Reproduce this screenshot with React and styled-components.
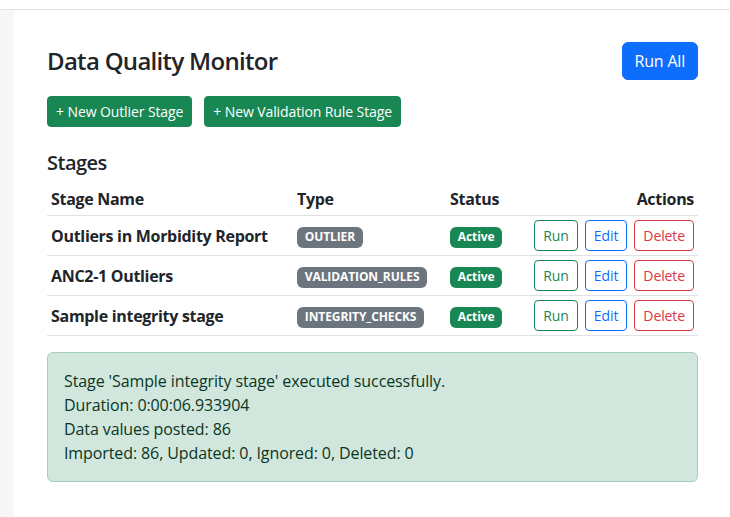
import React from "react";
import styled, { createGlobalStyle } from "styled-components";

const GlobalStyle = createGlobalStyle`
  * { box-sizing: border-box; }
  body {
    margin: 0;
    background: #fff;
    font-family: "Open Sans", "Noto Sans", sans-serif;
    font-size: 16px;
    line-height: 24px;
    color: #212529;
  }
`;

const TopBar = styled.header`
  height: 10px;
  border-bottom: 1px solid #e3e3e3;
  background: #fff;
`;

const Body = styled.div`
  display: flex;
  min-height: 507px;
`;

const Sidebar = styled.aside`
  width: 14px;
  flex: none;
  background: #f6f7f9;
`;

const Main = styled.main`
  flex: 1;
  padding: 32px 32px 0 33px;
`;

const HeaderRow = styled.div`
  display: flex;
  justify-content: space-between;
  align-items: center;
  margin-bottom: 16px;
`;

const Title = styled.h3`
  margin: 0;
  font-size: 24px;
  font-weight: 600;
  line-height: 30px;
  letter-spacing: -0.7px;
  color: #212529;
`;

const Button = styled.button`
  font-family: inherit;
  border: 1px solid ${(p) => p.$color};
  background: ${(p) => (p.$outline ? "transparent" : p.$color)};
  color: ${(p) => (p.$outline ? p.$color : "#fff")};
  font-size: ${(p) => (p.$small ? "14px" : "16px")};
  line-height: ${(p) => (p.$small ? "21px" : "24px")};
  padding: ${(p) => (p.$small ? "4px 8px" : "6px 12px")};
  border-radius: ${(p) => (p.$small ? "4px" : "6px")};
  letter-spacing: ${(p) => (p.$small ? "-0.1px" : "-0.2px")};
  cursor: pointer;
`;

const Toolbar = styled.div`
  display: flex;
  gap: 12px;
  margin-bottom: 24px;
`;

const SectionTitle = styled.h5`
  margin: 0 0 8px;
  font-size: 20px;
  font-weight: 600;
  line-height: 24px;
  letter-spacing: -0.5px;
`;

const Table = styled.table`
  width: 100%;
  border-collapse: collapse;
  table-layout: fixed;
  margin-bottom: 16px;
`;

const Th = styled.th`
  width: ${(p) => p.$w || "auto"};
  text-align: ${(p) => p.$align || "left"};
  font-weight: 700;
  padding: 4px;
  border-bottom: 1px solid #dee2e6;
  letter-spacing: -0.3px;
  vertical-align: middle;
`;

const Td = styled.td`
  text-align: ${(p) => p.$align || "left"};
  font-weight: ${(p) => (p.$bold ? 700 : 400)};
  letter-spacing: ${(p) => (p.$bold ? "-0.3px" : "0")};
  padding: 4px;
  border-bottom: 1px solid #dee2e6;
  vertical-align: middle;
  white-space: nowrap;
`;

const Actions = styled.div`
  display: flex;
  justify-content: flex-end;
  gap: 7px;
`;

const Badge = styled.span`
  display: inline-block;
  background: ${(p) => p.$color};
  color: #fff;
  font-size: 12px;
  font-weight: 700;
  line-height: 1;
  padding: 4.5px 7.8px;
  border-radius: 6px;
  letter-spacing: -0.1px;
  vertical-align: middle;
`;

const Alert = styled.div`
  background: #d1e7dd;
  border: 1px solid #a3cfbb;
  color: #0a3622;
  border-radius: 6px;
  padding: 16px;
  letter-spacing: -0.1px;
`;

const stages = [
  { name: "Outliers in Morbidity Report", type: "OUTLIER" },
  { name: "ANC2-1 Outliers", type: "VALIDATION_RULES" },
  { name: "Sample integrity stage", type: "INTEGRITY_CHECKS" },
];

const messages = [
  "Stage 'Sample integrity stage' executed successfully.",
  "Duration: 0:00:06.933904",
  "Data values posted: 86",
  "Imported: 86, Updated: 0, Ignored: 0, Deleted: 0",
];

export default function App() {
  return (
    <>
      <GlobalStyle />
      <TopBar />
      <Body>
        <Sidebar />
        <Main>
          <HeaderRow>
            <Title>Data Quality Monitor</Title>
            <Button $color="#0d6efd">Run All</Button>
          </HeaderRow>
          <Toolbar>
            <Button $small $color="#198754">+ New Outlier Stage</Button>
            <Button $small $color="#198754">+ New Validation Rule Stage</Button>
          </Toolbar>
          <SectionTitle>Stages</SectionTitle>
          <Table>
            <thead>
              <tr>
                <Th $w="246px">Stage Name</Th>
                <Th $w="153px">Type</Th>
                <Th $w="82px">Status</Th>
                <Th $align="right">Actions</Th>
              </tr>
            </thead>
            <tbody>
              {stages.map((s) => (
                <tr key={s.name}>
                  <Td $bold>{s.name}</Td>
                  <Td><Badge $color="#6c757d">{s.type}</Badge></Td>
                  <Td><Badge $color="#198754">Active</Badge></Td>
                  <Td $align="right">
                    <Actions>
                      <Button $small $outline $color="#198754">Run</Button>
                      <Button $small $outline $color="#0d6efd">Edit</Button>
                      <Button $small $outline $color="#dc3545">Delete</Button>
                    </Actions>
                  </Td>
                </tr>
              ))}
            </tbody>
          </Table>
          <Alert>
            {messages.map((m) => (
              <div key={m}>{m}</div>
            ))}
          </Alert>
        </Main>
      </Body>
    </>
  );
}
